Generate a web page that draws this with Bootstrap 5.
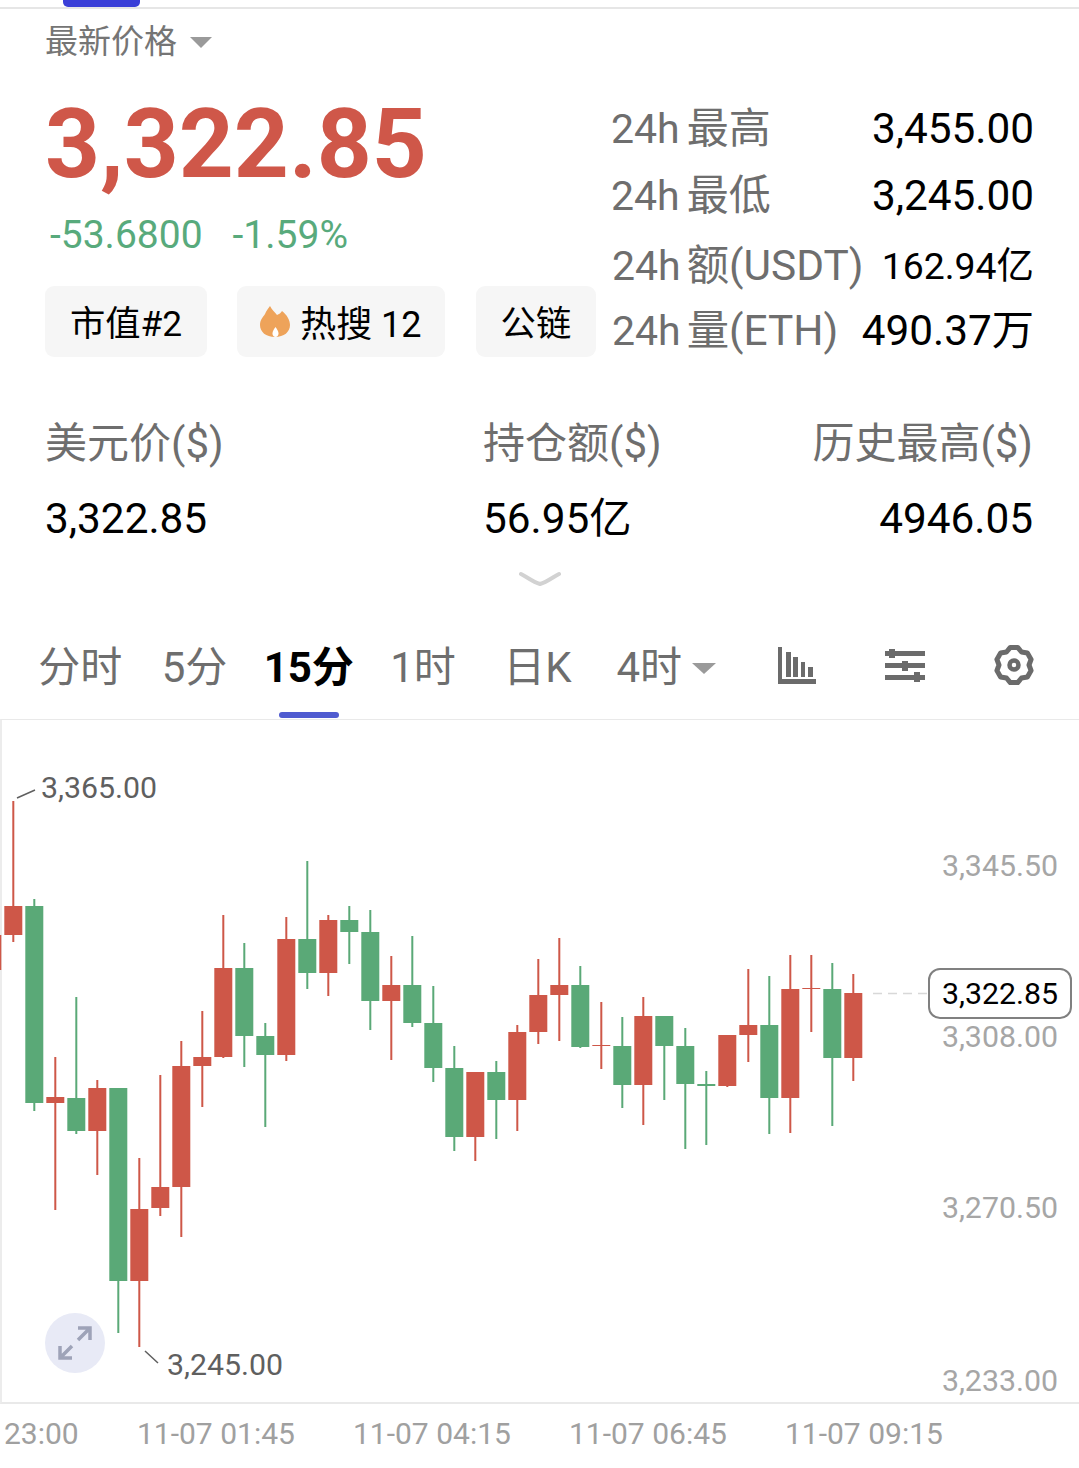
<!DOCTYPE html>
<html lang="zh-CN">
<head>
    <meta charset="UTF-8">
    <meta name="viewport" content="width=device-width, initial-scale=1.0">
    <title>ETH</title>
    <link rel="stylesheet" href="https://cdn.jsdelivr.net/npm/bootstrap@5.3.0/dist/css/bootstrap.min.css">
    <style>
        html, body { height: 1468px; overflow: hidden; }
        body { font-family: Roboto, "Noto Sans CJK SC", sans-serif; background: #fff; color: #000; }

        .top-line { height: 9px; border-bottom: 2px solid #e6e6e6; }
        .top-tab { width: 77px; height: 7px; margin-left: 63px; background: #3a3fd8; border-radius: 0 0 5px 5px; }

        .quote-left { width: 612px; padding-left: 45px; }
        .price-label { height: 66px; line-height: 68px; font-size: 33px; color: #757575; gap: 13px; }
        .caret-down { width: 0; height: 0; border-style: solid; border-color: #9a9a9a transparent transparent; border-width: 11px 11px 0; }
        .price-big { height: 136px; line-height: 138px; font-size: 96px; font-weight: 700; color: #cf5749; }
        .price-change { height: 48px; line-height: 48px; font-size: 39px; color: #58aa7c; padding-left: 5px; gap: 30px; }
        .chip-row { margin-top: 27px; gap: 30px; }
        .chip-item { height: 71px; padding: 6px 25px 0; background: #f6f6f6; border-radius: 9px; font-size: 35.3px; gap: 10px; }
        .chip-hot { padding: 6px 23px 0; font-size: 36px; margin-right: 1px; }
        .chip-hot svg { margin-top: -6px; }

        .quote-right { width: 423px; padding-top: 87px; margin-left: -1px; }
        .stat-row { height: 66px; line-height: 66px; font-size: 42.3px; }
        .stat-row.stat-gap { margin-top: 1px; }
        .stat-row.stat-gap-lg { margin-top: 4px; padding-left: 1px; }
        .stat-row.stat-back { margin-top: -1px; padding-left: 1px; }
        .stat-name { color: #6e6e6e; font-size: 41px; }
        .stat-name-cjk { margin-left: 7px; font-size: 42px; }
        .stat-name-wide { margin-left: 6px; font-size: 42.4px; }
        .stat-value-small { font-size: 37.4px; }

        .market-grid { display: grid; grid-template-columns: 438px 329px 1fr; padding: 46px 46px 0 45px; font-size: 42.3px; white-space: nowrap; }
        .market-grid > div { height: 68px; line-height: 68px; }
        .market-grid .market-name { color: #6e6e6e; font-size: 42px; }
        .market-grid .market-value { height: 68px; margin-top: 7px; }

        .fold-arrow { height: 72px; padding-top: 18px; }

        .period-bar { height: 94px; }
        .period-list { padding-left: 23px; }
        .period-cell { width: 114.3px; height: 94px; line-height: 86px; font-size: 42px; color: #6e6e6e; text-align: center; position: relative; }
        .period-cell.active { color: #000; font-weight: 700; }
        .period-cell.active::after { content: ""; position: absolute; left: 27px; bottom: 1px; width: 60px; height: 6px; background: #4f5bd0; border-radius: 3px; }
        .period-more { margin-left: 22px; height: 94px; line-height: 86px; font-size: 42px; color: #6e6e6e; gap: 10px; padding-bottom: 8px; }
        .period-more .caret-down { border-width: 11px 12px 0; }
        .period-tools { margin-left: auto; padding: 0 44px 14px 0; gap: 68px; }
        .tool-bars { margin-right: 1px; }

        .chart-wrap { height: 685px; border-top: 1px solid #e9e9e9; border-left: 2px solid #ececec; border-bottom: 2px solid #e9e9e9; }
        .chart-svg { display: block; width: 1079px; height: 682px; margin-left: -2px; }
        .y-axis { position: absolute; top: 121px; right: 21px; font-size: 30.3px; line-height: 50px; color: #a6a6a6; }
        .y-axis div { height: 171px; }
        .y-axis div:last-child { margin-top: 2px; }
        .extreme-label { position: absolute; font-size: 30.3px; line-height: 40px; color: #5f5f5f; }
        .extreme-high { left: 39px; top: 48px; }
        .extreme-low { left: 165px; top: 625px; }
        .last-price { position: absolute; left: 926px; top: 248px; width: 144px; height: 51px; border: 2px solid #808080; border-radius: 12px; background: #fff; font-size: 30.3px; }
        .expand-btn { position: absolute; left: 43px; top: 593px; width: 60px; height: 60px; background: #e8eaf6; }

        .time-axis { padding-left: 4px; font-size: 30px; line-height: 60px; color: #a0a0a0; }
        .time-axis span { width: 216px; }
        .time-axis span:first-child { width: 133px; }
    </style>
</head>
<body>
    <div class="top-line"><div class="top-tab"></div></div>

    <div class="d-flex">
        <div class="quote-left">
            <div class="price-label d-flex align-items-center">
                <span>最新价格</span>
                <span class="caret-down"></span>
            </div>
            <div class="price-big">3,322.85</div>
            <div class="price-change d-flex">
                <span>-53.6800</span>
                <span>-1.59%</span>
            </div>
            <div class="chip-row d-flex">
                <div class="chip-item d-flex align-items-center">市值#2</div>
                <div class="chip-item chip-hot d-flex align-items-center">
                    <svg width="30" height="31" viewBox="0 0 30 31">
                        <path fill="#eea35a" d="M10 0c2 4 5 6 7 9 2-1 4-2 5-4 5 4 8 9 8 14 0 7-6 12-15 12S0 26 0 19c0-5 3-8 5-11 1-3 3-5 5-8z"/>
                        <path fill="#fff" d="M15.500 21c1.800 2.500 3 4.500 3 6.500 0 2-1.300 3.500-3 3.500s-3-1.500-3-3.500c0-2 1.200-4 3-6.500z"/>
                    </svg>
                    <span>热搜 12</span>
                </div>
                <div class="chip-item d-flex align-items-center">公链</div>
            </div>
        </div>
        <div class="quote-right">
            <div class="stat-row d-flex justify-content-between">
                <span class="stat-name">24h<span class="stat-name-cjk">最高</span></span><span>3,455.00</span>
            </div>
            <div class="stat-row stat-gap d-flex justify-content-between">
                <span class="stat-name">24h<span class="stat-name-cjk">最低</span></span><span>3,245.00</span>
            </div>
            <div class="stat-row stat-gap-lg d-flex justify-content-between">
                <span class="stat-name">24h<span class="stat-name-cjk stat-name-wide">额(USDT)</span></span><span class="stat-value-small">162.94亿</span>
            </div>
            <div class="stat-row stat-back d-flex justify-content-between">
                <span class="stat-name">24h<span class="stat-name-cjk stat-name-wide">量(ETH)</span></span><span>490.37万</span>
            </div>
        </div>
    </div>

    <div class="market-grid">
        <div class="market-name">美元价($)</div>
        <div class="market-name">持仓额($)</div>
        <div class="market-name text-end">历史最高($)</div>
        <div class="market-value">3,322.85</div>
        <div class="market-value">56.95亿</div>
        <div class="market-value text-end">4946.05</div>
    </div>

    <div class="fold-arrow d-flex justify-content-center">
        <svg width="42" height="18" viewBox="0 0 42 18"><path d="M2 3c6 3 12 8 19 10 7-2 13-7 19-10" fill="none" stroke="#d2d2d2" stroke-width="4" stroke-linecap="round"/></svg>
    </div>

    <div class="period-bar d-flex align-items-center">
        <div class="period-list d-flex">
            <div class="period-cell">分时</div>
            <div class="period-cell">5分</div>
            <div class="period-cell active">15分</div>
            <div class="period-cell">1时</div>
            <div class="period-cell">日K</div>
        </div>
        <div class="period-more d-flex align-items-center">
            <span>4时</span>
            <span class="caret-down"></span>
        </div>
        <div class="period-tools d-flex align-items-center">
            <svg class="tool-bars" width="38" height="37" viewBox="0 0 38 37" fill="#6b6b6b">
                <path d="M0 0h4v32h34v5H0z"/>
                <path d="M8 5h5v25H8zM15 10h5v20h-5zM23 15h4v15h-4zM30 20h5v10h-5z"/>
            </svg>
            <svg width="40" height="34" viewBox="0 0 40 34" fill="#6b6b6b">
                <path d="M0 3h40v5H0zM0 15h40v5H0zM0 27h40v5H0z"/>
                <path d="M4 1h6v9H4zM17 13h6v10h-6zM29 24h6v10h-6z"/>
            </svg>
            <svg width="42" height="42" viewBox="-21 -21 42 42">
                <path d="M-3.700-17.600H3.700L7.500-13 13.400-12 17.100-5.600 15 0 17.100 5.600 13.400 12 7.500 13 3.700 17.600H-3.700L-7.500 13-13.400 12-17.100 5.600-15 0-17.100-5.600-13.400-12-7.500-13z" fill="none" stroke="#6b6b6b" stroke-width="5" stroke-linejoin="round"/>
                <circle r="4.500" fill="none" stroke="#6b6b6b" stroke-width="4.500"/>
            </svg>
        </div>
    </div>

    <div class="chart-wrap position-relative">
        <svg class="chart-svg" id="candles" viewBox="0 720 1079 682">
            <path d="M17 798l18-8M145 1351l13 12" fill="none" stroke="#5f5f5f" stroke-width="1.500"/>
            <path d="M873 993.500h54" fill="none" stroke="#d8d8d8" stroke-width="1.500" stroke-dasharray="9 6"/>
        </svg>
        <div class="extreme-label extreme-high">3,365.00</div>
        <div class="extreme-label extreme-low">3,245.00</div>
        <div class="y-axis">
            <div>3,345.50</div>
            <div>3,308.00</div>
            <div>3,270.50</div>
            <div>3,233.00</div>
        </div>
        <div class="last-price d-flex align-items-center justify-content-center">3,322.85</div>
        <div class="expand-btn rounded-circle d-flex align-items-center justify-content-center">
            <svg width="36" height="36" viewBox="0 0 36 36" fill="none" stroke="#9ea3b8" stroke-width="3.500">
                <path d="M21 15 33 3M21 3h12v12M15 21 3 33M3 21v12h12"/>
            </svg>
        </div>
    </div>

    <div class="time-axis d-flex">
        <span>23:00</span>
        <span>11-07 01:45</span>
        <span>11-07 04:15</span>
        <span>11-07 06:45</span>
        <span>11-07 09:15</span>
    </div>

    <script>
        // [up(red)=1, wick top, body top, body bottom, wick bottom]
        const candleData = [
            [1, 920, 935, 970, 970],
            [1, 801, 906, 935, 942],
            [0, 899, 906, 1103, 1111],
            [1, 1057, 1097, 1103, 1210],
            [0, 997, 1098, 1131, 1134],
            [1, 1080, 1088, 1131, 1175],
            [0, 1088, 1088, 1281, 1333],
            [1, 1158, 1209, 1281, 1347],
            [1, 1075, 1187, 1208, 1216],
            [1, 1041, 1066, 1187, 1237],
            [1, 1011, 1057, 1066, 1107],
            [1, 915, 968, 1057, 1058],
            [0, 943, 968, 1036, 1067],
            [0, 1023, 1036, 1055, 1127],
            [1, 917, 939, 1055, 1061],
            [0, 861, 939, 973, 989],
            [1, 915, 920, 973, 996],
            [0, 906, 920, 932, 964],
            [0, 910, 932, 1001, 1030],
            [1, 956, 985, 1001, 1060],
            [0, 936, 985, 1023, 1027],
            [0, 986, 1023, 1068, 1082],
            [0, 1046, 1068, 1137, 1151],
            [1, 1072, 1072, 1137, 1161],
            [0, 1061, 1072, 1100, 1139],
            [1, 1025, 1032, 1100, 1131],
            [1, 959, 995, 1032, 1044],
            [1, 938, 985, 995, 1041],
            [0, 966, 985, 1047, 1048],
            [1, 1002, 1045, 1046, 1069],
            [0, 1017, 1046, 1085, 1108],
            [1, 997, 1016, 1085, 1125],
            [0, 1016, 1016, 1046, 1100],
            [0, 1028, 1046, 1084, 1149],
            [0, 1071, 1084, 1086, 1145],
            [1, 1035, 1035, 1086, 1087],
            [1, 969, 1025, 1035, 1062],
            [0, 976, 1025, 1098, 1134],
            [1, 955, 989, 1098, 1133],
            [1, 955, 988, 989, 1032],
            [0, 963, 989, 1058, 1126],
            [1, 974, 993, 1058, 1081]
        ];

        const svg = document.getElementById('candles');
        const NS = 'http://www.w3.org/2000/svg';

        function addRect(x, y, w, h, fill) {
            const r = document.createElementNS(NS, 'rect');
            r.setAttribute('x', x);
            r.setAttribute('y', y);
            r.setAttribute('width', w);
            r.setAttribute('height', h);
            r.setAttribute('fill', fill);
            svg.appendChild(r);
        }

        candleData.forEach((c, i) => {
            const cx = 13.3 + (i - 1) * 21;
            const color = c[0] ? '#ce5748' : '#5aa977';
            addRect(cx - 1, c[1], 2, c[4] - c[1], color);
            addRect(cx - 9, c[2], 18, c[3] - c[2], color);
        });
    </script>
    <script src="https://cdn.jsdelivr.net/npm/bootstrap@5.3.0/dist/js/bootstrap.bundle.min.js"></script>
</body>
</html>
